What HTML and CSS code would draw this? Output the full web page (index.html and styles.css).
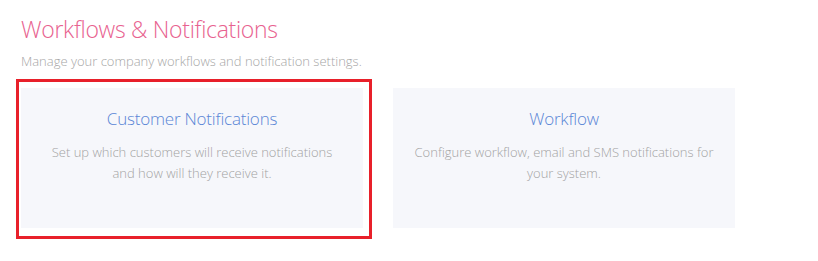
FILE: index.html
```html
<!DOCTYPE html>
<html>
<head>
<meta charset="utf-8">
<link rel="stylesheet" href="styles.css">
</head>
<body>
<div class="page">
  <h1 class="title">Workflows &amp; Notifications</h1>
  <p class="subtitle">Manage your company workflows and notification settings.</p>
  <div class="cards">
    <div class="selected">
      <div class="card">
        <h2 class="card-title">Customer Notifications</h2>
        <p class="card-text">Set up which customers will receive notifications and how will they receive it.</p>
      </div>
    </div>
    <div class="card card-plain">
      <h2 class="card-title">Workflow</h2>
      <p class="card-text">Configure workflow, email and SMS notifications for your system.</p>
    </div>
  </div>
</div>
</body>
</html>
```
FILE: styles.css
```css
html, body {
  margin: 0;
  padding: 0;
  background: #ffffff;
}
body {
  font-family: "Open Sans", "Noto Sans", sans-serif;
  font-weight: 300;
}
.page {
  padding: 13px 0 0 21px;
}
.title {
  margin: 0;
  font-size: 23px;
  letter-spacing: -0.3px;
  font-weight: 300;
  line-height: 32px;
  color: #e8628f;
}
.subtitle {
  margin: 7px 0 0 0;
  font-size: 13px;
  line-height: 18px;
  color: #a6a6a6;
}
.cards {
  display: flex;
  align-items: flex-start;
  margin-top: 9px;
  margin-left: -5px;
}
.selected {
  border: 3px solid #e8202a;
  padding: 6px 6px 8px 2px;
}
.card {
  width: 342px;
  height: 140px;
  box-sizing: border-box;
  background: #f6f7fb;
  text-align: center;
  padding: 20px 20px 0;
}
.card-plain {
  margin-left: 21px;
  margin-top: 9px;
}
.card-title {
  margin: 0;
  font-size: 17px;
  letter-spacing: -0.2px;
  font-weight: 300;
  line-height: 22px;
  color: #5a86d6;
}
.card-text {
  margin: 12px 0 0;
  font-size: 13px;
  line-height: 21px;
  color: #a3a3a3;
}
```
